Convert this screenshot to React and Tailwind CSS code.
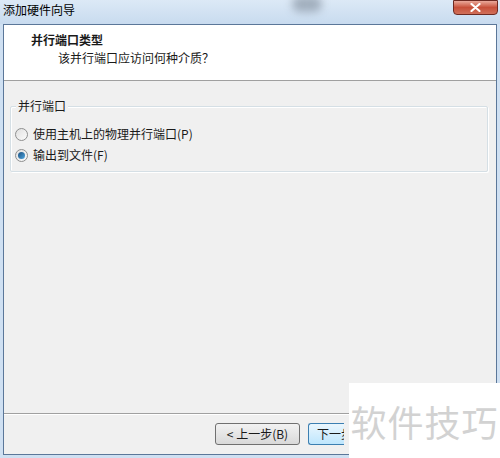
import React from "react";

const font = { fontFamily: '"Noto Sans CJK SC", "Noto Sans", sans-serif' };

function Radio({ checked }) {
  return (
    <span className="relative inline-flex size-[13px] items-center justify-center rounded-full border border-[#8e8f8f] bg-gradient-to-br from-[#e0e0e0] to-[#fbfbfb]">
      {checked && (
        <span className="size-[7px] rounded-full bg-gradient-to-br from-[#1c5180] to-[#4fa6e0]" />
      )}
    </span>
  );
}

export default function App() {
  return (
    <div
      className="relative h-[458px] w-[500px] overflow-hidden bg-[#cfe0f2] text-[12px] text-[#1a1a1a]"
      style={font}
    >
      {/* title bar */}
      <div className="relative flex h-[24px] items-start bg-gradient-to-b from-[#dce9f6] to-[#c8dbef] pl-[3px] pt-[2px]">
        <span className="text-[12px] leading-[16px] text-black">添加硬件向导</span>
        <div className="absolute left-[292px] top-[-4px] h-[16px] w-[30px] rounded-full bg-[#8a97a6] opacity-70 blur-[4px]" />
        <div className="absolute right-[2px] top-0 flex h-[15px] w-[45px] items-center justify-center rounded-b-[4px] border border-[#6d2a22] bg-gradient-to-b from-[#e9a99b] via-[#c7503a] to-[#d0705a]">
          <svg width="11" height="9" viewBox="0 0 11 9">
            <path d="M1.5 1 L9.5 8 M9.5 1 L1.5 8" stroke="#fff" strokeWidth="2.2" strokeLinecap="round" />
          </svg>
        </div>
      </div>

      {/* client area */}
      <div className="mx-[3px] flex h-[431px] flex-col border border-[#5b7799] bg-[#f0f0f0]">
        <div className="flex h-[56px] flex-col border-b border-[#a0a0a0] bg-white pl-[27px] pt-[6px]">
          <div className="text-[12px] font-bold leading-[18px]">并行端口类型</div>
          <div className="pl-[27px] text-[12px] leading-[18px]">该并行端口应访问何种介质？</div>
        </div>

        <div className="flex flex-1 flex-col px-[6px] pt-[25px]">
          <div className="relative h-[66px] w-[478px] rounded-[2px] border border-[#d5dfe5] shadow-[inset_1px_1px_0_#fff,1px_1px_0_#fff]">
            <span className="absolute left-[5px] top-[-10px] bg-[#f0f0f0] px-[2px] leading-[18px]">并行端口</span>
            <div className="flex flex-col gap-[7px] pl-[4px] pt-[20px]">
              <label className="flex items-center gap-[5px] leading-[14px]">
                <Radio />
                <span>使用主机上的物理并行端口(P)</span>
              </label>
              <label className="flex items-center gap-[5px] leading-[14px]">
                <Radio checked />
                <span>输出到文件(F)</span>
              </label>
            </div>
          </div>
          <div className="flex-1" />
        </div>

        <div className="h-[41px] border-t border-[#a0a0a0] shadow-[inset_0_1px_0_#fff]">
          <div className="flex gap-[8px] pl-[211px] pt-[9px]">
            <button className="h-[22px] w-[85px] rounded-[3px] border border-[#707070] bg-gradient-to-b from-[#f2f2f2] to-[#d9d9d9] text-[12px] leading-none">
              &lt; 上一步(B)
            </button>
            <button className="h-[22px] w-[36px] overflow-hidden whitespace-nowrap rounded-l-[3px] border border-r-0 border-[#3c7fb1] bg-gradient-to-b from-[#eaf6fd] to-[#bee6fd] pl-[8px] text-left text-[12px] leading-none">
              下一步
            </button>
          </div>
        </div>
      </div>

      {/* watermark */}
      <div className="absolute left-[349px] top-[383px] flex h-[75px] w-[151px] items-center justify-center bg-white">
        <span className="text-[36px] leading-none tracking-[1px] text-[#d2d2d2]">软件技巧</span>
      </div>
    </div>
  );
}
